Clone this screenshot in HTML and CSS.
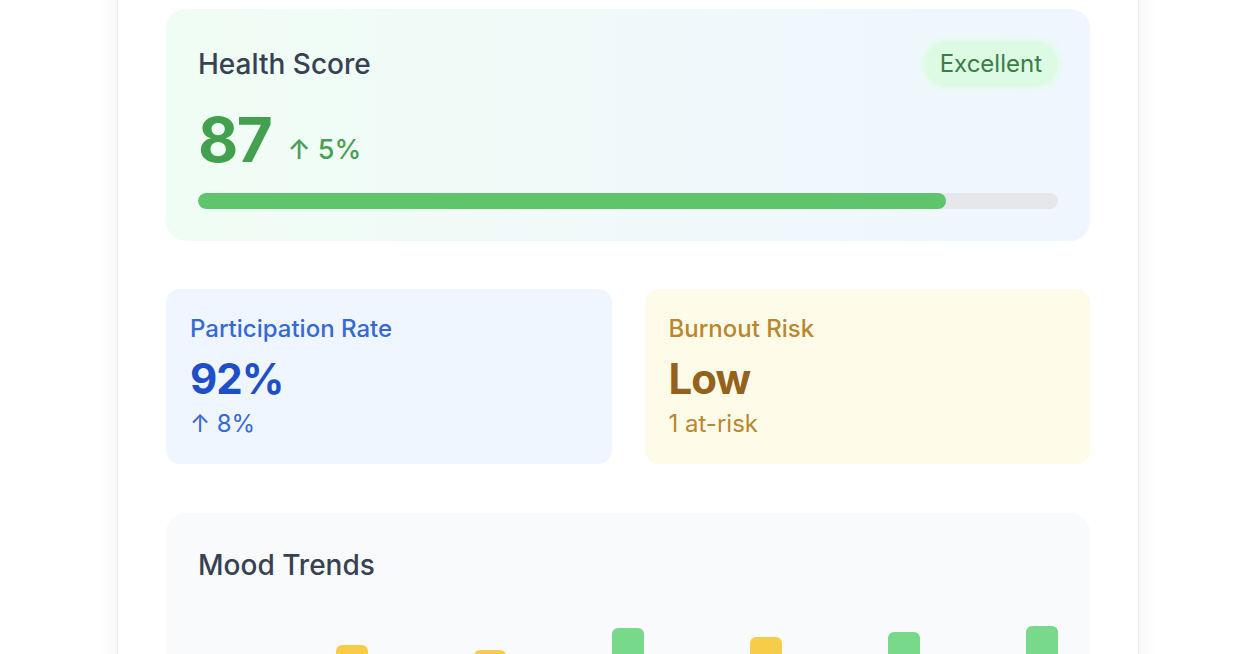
FILE: index.html
```html
<!DOCTYPE html>
<html lang="en">
<head>
<meta charset="utf-8">
<title>Team Health</title>
<link rel="stylesheet" href="styles.css">
</head>
<body>
<div class="page">
  <main class="panel">
    <section class="health">
      <div class="health-head">
        <h2 class="title">Health Score</h2>
        <span class="badge">Excellent</span>
      </div>
      <div class="score-row">
        <span class="score">87</span>
        <span class="delta">↑ 5%</span>
      </div>
      <div class="track"><div class="fill" style="width: 87%"></div></div>
    </section>

    <section class="stats">
      <div class="stat stat-blue">
        <div class="stat-label">Participation Rate</div>
        <div class="stat-value">92%</div>
        <div class="stat-sub">↑ 8%</div>
      </div>
      <div class="stat stat-yellow">
        <div class="stat-label">Burnout Risk</div>
        <div class="stat-value">Low</div>
        <div class="stat-sub">1 at-risk</div>
      </div>
    </section>

    <section class="mood">
      <h2 class="title mood-title">Mood Trends</h2>
      <div class="chart">
        <div class="bar bar-green" style="height: 130px"></div>
        <div class="bar bar-yellow" style="height: 164px"></div>
        <div class="bar bar-yellow" style="height: 159px"></div>
        <div class="bar bar-green" style="height: 181px"></div>
        <div class="bar bar-yellow" style="height: 172px"></div>
        <div class="bar bar-green" style="height: 177px"></div>
        <div class="bar bar-green" style="height: 183px"></div>
      </div>
    </section>
  </main>
</div>
</body>
</html>
```

FILE: styles.css
```css
* { box-sizing: border-box; }

html, body {
  margin: 0;
  padding: 0;
  background: #ffffff;
}

body {
  font-family: Inter, "Noto Sans", "Liberation Sans", sans-serif;
  overflow: hidden;
}

.page {
  padding-left: 117px;
  margin-top: -40px;
}

.panel {
  width: 1022px;
  background: #ffffff;
  border: 1px solid #ebebeb;
  box-shadow: 0 0 22px rgba(0, 0, 0, 0.06);
  padding: 48px;
}

.health {
  border-radius: 20px;
  padding: 32px;
  background: linear-gradient(90deg, #f0fdf4 0%, #eff6ff 100%);
}

.health-head {
  display: flex;
  justify-content: space-between;
  align-items: center;
}

.title {
  margin: 0;
  font-size: 28px;
  line-height: 36px;
  font-weight: 500;
  color: #374151;
}

.badge {
  padding: 8px 16px;
  border-radius: 999px;
  background: #ddfbe4;
  box-shadow: 0 0 8px 2px #e2fbe7;
  color: #3b7d47;
  font-size: 24px;
  line-height: 30px;
  font-weight: 400;
}

.score-row {
  display: flex;
  align-items: baseline;
  gap: 16px;
  margin-top: 22px;
}

.score {
  font-size: 62px;
  line-height: 62px;
  font-weight: 700;
  color: #43a04f;
  letter-spacing: -1.5px;
}

.delta {
  font-size: 27px;
  line-height: 36px;
  font-weight: 500;
  color: #4a9f57;
  position: relative;
  top: -3px;
}

.track {
  margin-top: 22px;
  height: 16px;
  border-radius: 8px;
  background: #e5e7eb;
  overflow: hidden;
}

.fill {
  height: 100%;
  border-radius: 8px;
  background: #5fc46b;
}

.stats {
  margin-top: 48px;
  display: grid;
  grid-template-columns: 1fr 1fr;
  gap: 33px;
}

.stat {
  border-radius: 14px;
  padding: 24px;
}

.stat-blue { background: #eff6ff; }
.stat-yellow { background: #fefce8; }

.stat-label {
  font-size: 24px;
  line-height: 32px;
  font-weight: 500;
  margin-bottom: 10px;
}

.stat-value {
  font-size: 42px;
  line-height: 48px;
  font-weight: 700;
  letter-spacing: -1px;
  margin-bottom: 5px;
}

.stat-sub {
  font-size: 24px;
  line-height: 32px;
  font-weight: 400;
}

.stat-blue .stat-label { color: #3669d6; }
.stat-blue .stat-value { color: #1f4fc8; }
.stat-blue .stat-sub { color: #3868d3; }

.stat-yellow .stat-label { color: #b8872f; }
.stat-yellow .stat-value { color: #94621d; }
.stat-yellow .stat-sub { color: #b8872f; }

.mood {
  margin-top: 49px;
  border-radius: 20px;
  background: #f9fafb;
  padding: 32px;
}

.mood-title {
  line-height: 40px;
}

.chart {
  margin-top: 32px;
  height: 192px;
  display: flex;
  justify-content: space-between;
  align-items: flex-end;
}

.bar {
  width: 32px;
  border-radius: 6px 6px 0 0;
}

.bar-green { background: #79d98a; }
.bar-yellow { background: #f5cd48; }
```
